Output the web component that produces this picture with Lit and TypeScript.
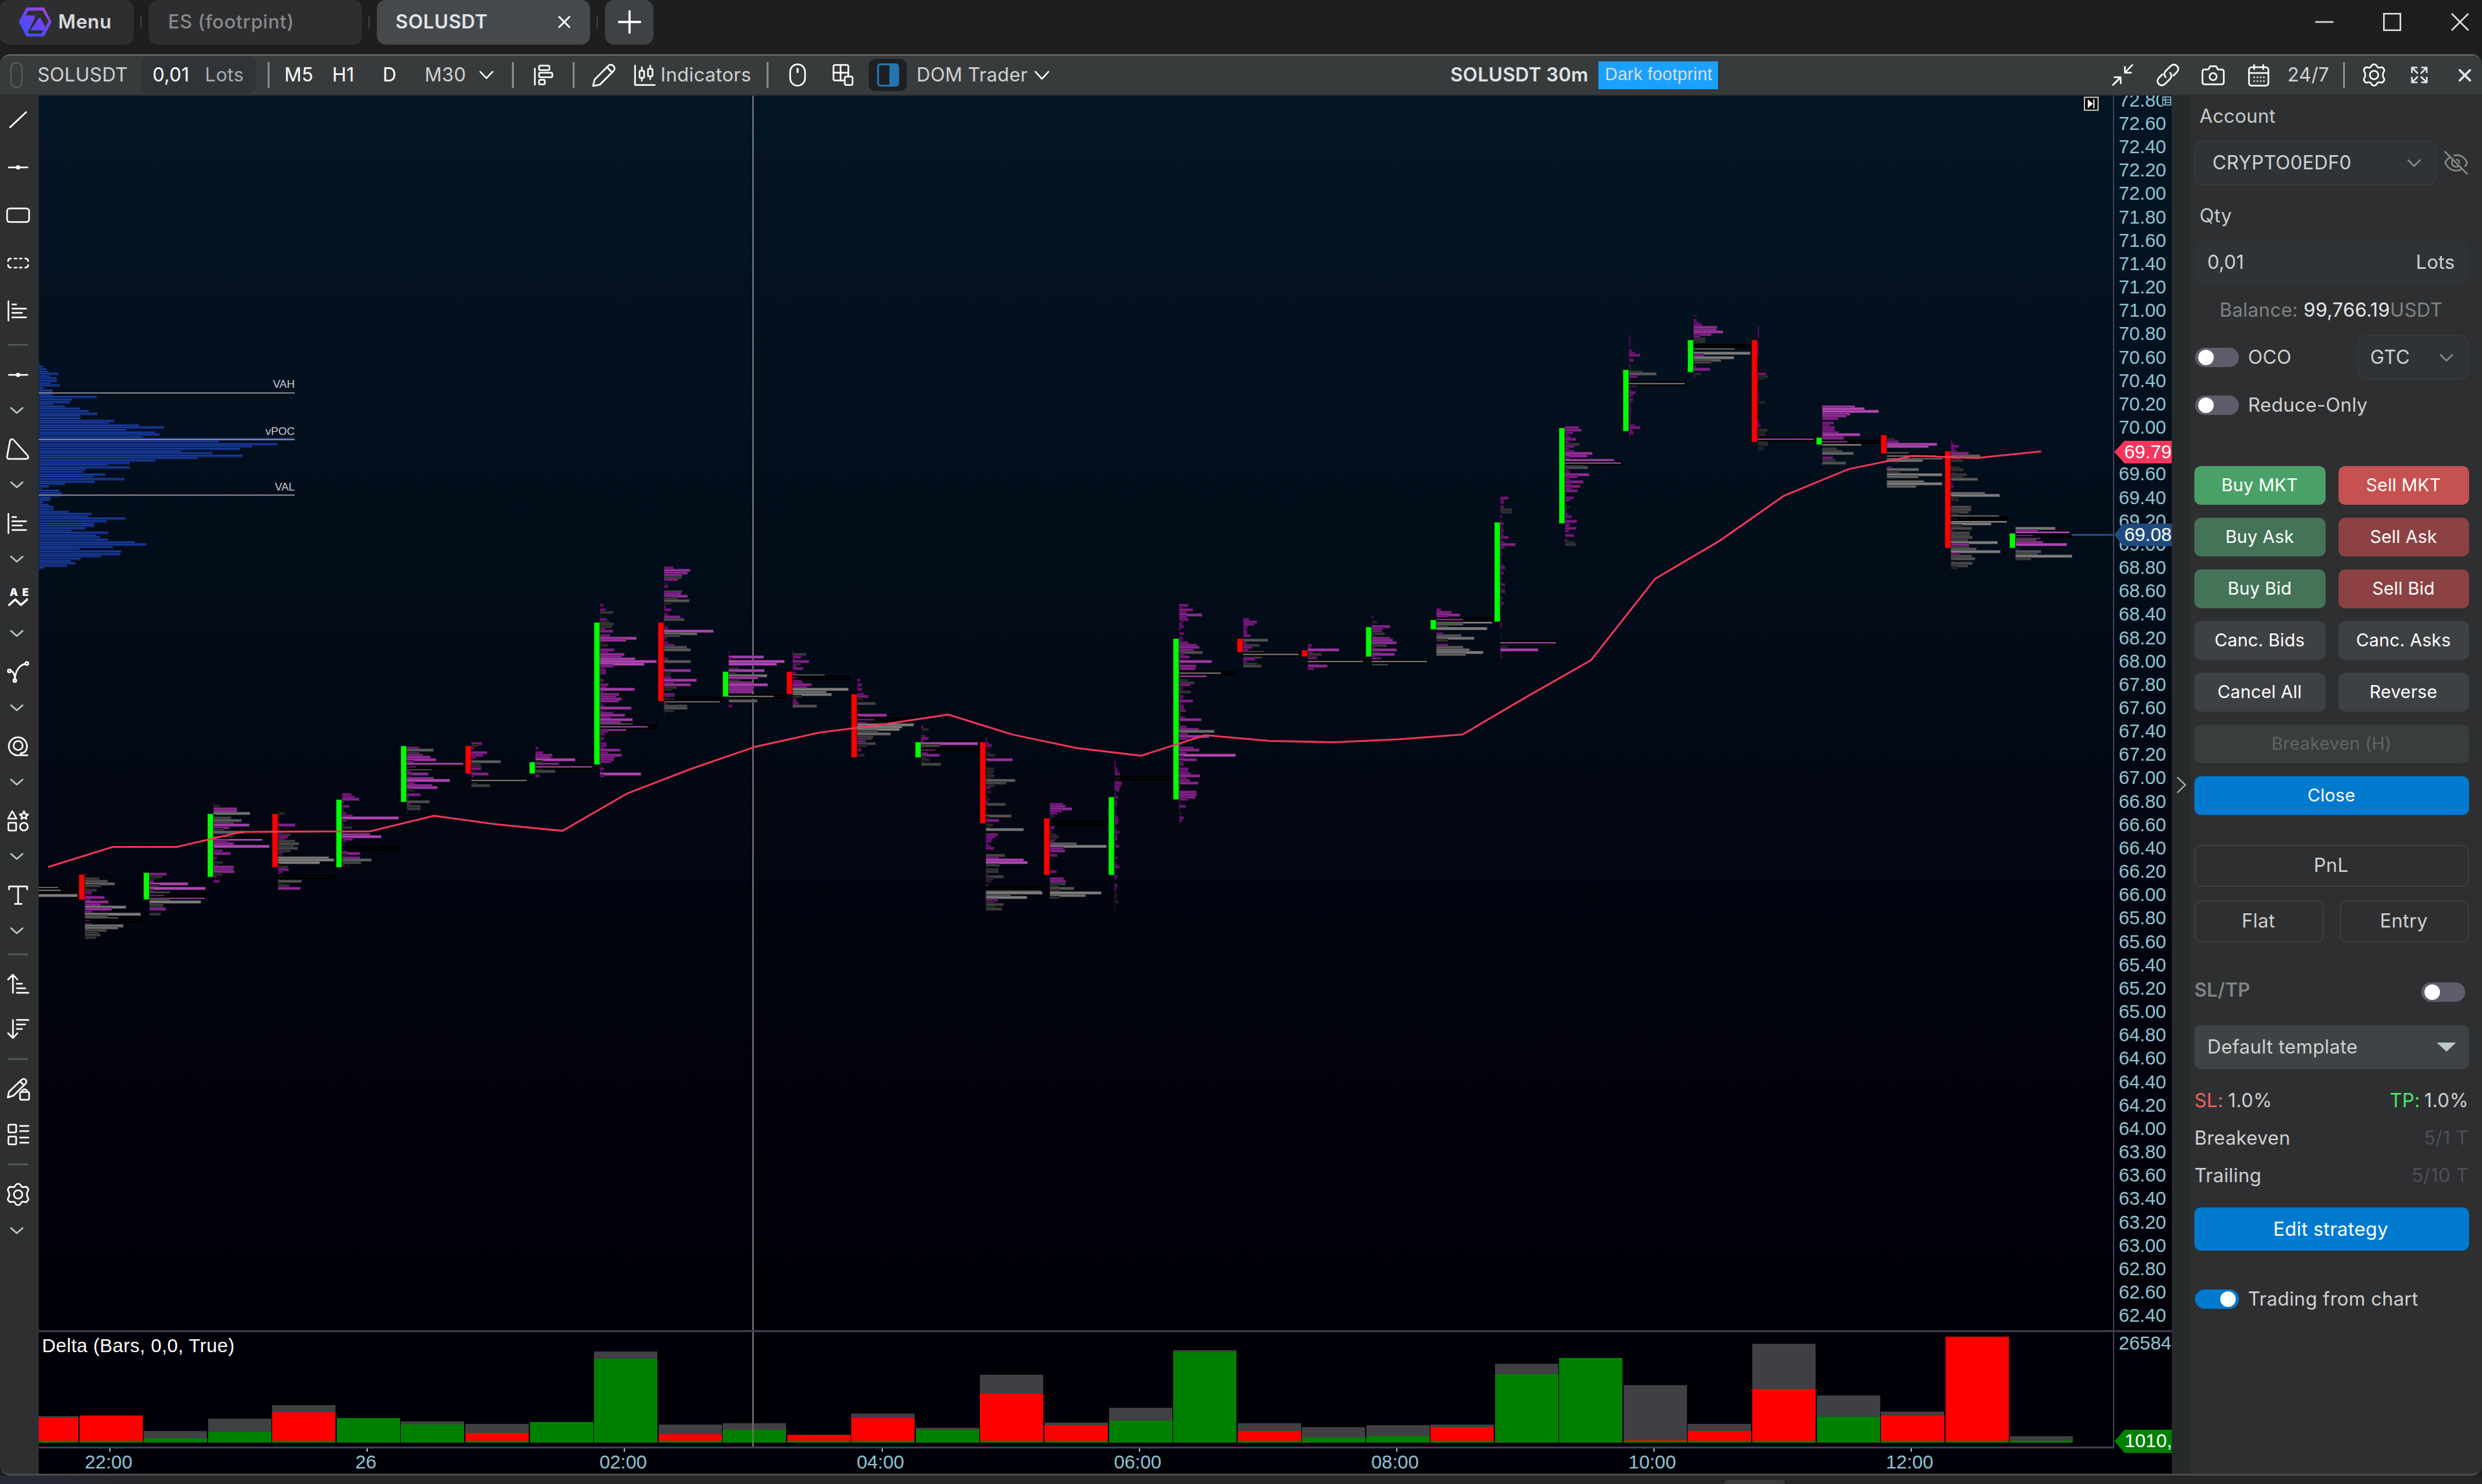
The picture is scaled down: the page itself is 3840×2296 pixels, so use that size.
import { LitElement, html, svg, css, SVGTemplateResult } from "lit";
import { customElement } from "lit/decorators.js";

/* ---------- chart geometry ---------- */
const SLOT = 99.55;
const BASE = 131.2;
const rowY = (r: number) => 481.1 + r * 3.616;

interface Candle {
  up: boolean;
  top: number;
  bottom: number;
  row: number;
  peak: number;
  rows: string;
}
const c = (up: boolean, top: number, bottom: number, row: number, peak: number, rows: string): Candle => ({ up, top, bottom, row, peak, rows });

const CANDLES: Candle[] = [
  c(false, 0, 0, 247, 106, "g70 kg75 g0 g106"),
  c(false, 1353, 1392, 241, 106, "p1 g0 g28 g43 g57 g31 g8 g23 p13 g5 p37 p12 p45 p30 g77 p51 p14 g105 g43 g63 kp8 g14 g72 g63 g41 g26 g30 g22"),
  c(true, 1350, 1392, 241, 106, "p32 g24 g12 p9 p72 g19 p105 p8 g38 kp28 p104 g39 g96 g27 g26 p31 g3 g22"),
  c(true, 1259, 1357, 211, 106, "p2 g13 p44 p45 g69 g5 g34 g53 g38 p68 p30 g19 g58 p21 kg36 p91 p28 p39 p105 p2 p18 p32 g3 p7 p2 g18 g10 p38 p37 p40 g18 p6 g3 p12"),
  c(false, 1259, 1342, 214, 106, "g2 g13 g5 g2 g1 p4 p32 g5 g4 g10 g24 p19 p14 g32 g40 g30 g37 g24 p10 g8 g95 g105 g78 g5 g19 p21 p10 p4 kg6 p2 g45 g10 g22 p42"),
  c(true, 1237, 1342, 207, 106, "p18 p24 p32 p5 g4 p15 p3 p5 p8 p20 p106 p8 p2 p5 g19 g3 g6 p53 p73 p20 p7 g5 p5 kp4 p10 p34 g10 p34 g55 g36 p5"),
  c(true, 1154, 1241, 187, 106, "p24 g51 g24 p30 p45 p56 p14 p106 kp18 g48 p8 p41 g10 p51 p81 p16 p48 p58 g14 g4 p26 p5 p3 g43 p8 g26 g27 g2 g1"),
  c(false, 1154, 1197, 185, 106, "p20 g14 p6 g3 p30 p23 p10 g5 g55 g18 g19 p19 g8 p32 p5 p4 kg103 g12 g35"),
  c(true, 1179, 1197, 187, 106, "p6 g1 p16 p33 p30 p75 g14 p44 kp106 g14 g37 g8 p9"),
  c(true, 963, 1183, 126, 106, "p7 g1 p12 g25 g4 g3 p13 g18 g27 g23 p11 p25 g3 p19 p69 p49 p5 g16 g4 p28 p16 p46 p41 p66 p106 p83 p27 p8 p12 p12 g2 g3 p7 g3 p17 p13 p65 p8 p36 p30 p41 p36 p5 p8 p59 p6 p25 p47 p20 p62 p40 g62 kp89 p49 p16 p10 p4 p8 p4 p13 p13 p8 p38 p16 p41 p28 p26 p22 p3 g1 p9 p3 p77 p8 g3 g2"),
  c(false, 963, 1085, 110, 106, "p18 p49 p44 p35 g34 p27 g6 g8 p8 g0 g35 p33 p45 g26 g48 g14 p3 p5 p14 g2 p9 p31 g39 p3 g4 g10 p9 p93 g63 g31 p6 g3 p9 p20 g43 g50 g0 g2 g3 p9 g50 g0 g3 p3 p51 g14 g12 p15 p61 p19 p51 g24 g16 g3 p20 p20 kg20 g105 p6 g43 g45 g19 g2 g1"),
  c(true, 1039, 1078, 146, 106, "p2 g0 p66 p6 p105 p90 g0 g19 p68 g16 g72 p56 g22 p45 p74 p48 p47 p44 g0 kg84 g16 g54 g2 p7"),
  c(false, 1039, 1074, 146, 106, "p3 g26 p17 p5 p31 g16 p8 p20 g3 p7 g60 kp10 p17 p20 p36 p28 g105 g64 g73 g17 g8 p9 p12 g46"),
  c(false, 1074, 1172, 158, 114, "p7 g1 p11 p4 p10 g2 p14 p23 g12 g4 g38 g2 g4 g7 g5 p60 g8 kp35 p20 g114 g91 g85 g43 g68 g34 g31 p18 g38 g20 g8 p9 g3 g15"),
  c(true, 1148, 1172, 178, 114, "p5 g16 g1 g2 p9 p16 p5 p114 g38 p8 kp28 p14 p38 g12 g17 g8 g40"),
  c(false, 1148, 1274, 183, 114, "p3 p2 p6 p13 g10 g5 g10 g19 g5 p54 g3 g0 g3 g17 g17 g14 g18 g13 g59 g41 g19 p10 g5 g12 g4 p3 g9 p5 g40 g3 p3 g3 g5 g52 g8 p27 g4 g15 g10 g77 g0 p24 p20 p14 p12 p5 p10 p17 g3 g0 g39 p27 p76 p84 g28 g0 g26 g26 p4 g36 g16 g12 g0 p7 kg0 g112 g114 g51 g83 p25 g18 g36 g20 g33 g2"),
  c(false, 1266, 1354, 211, 114, "p27 p32 p45 p25 p16 g10 g6 g4 kg0 g0 p10 g2 p4 g13 g19 g14 p10 g54 g114 p28 p31 g5 p15 g4 g0 g0 g5 g2 g2 p14 g0 g0 p29 p32 g32 g18 g49 g22 g103 g73 g19"),
  c(true, 1233, 1354, 193, 114, "p2 p2 p2 p6 p8 p12 g3 kg12 p10 p16 p14 p12 p10 g4 p3 p8 g3 p5 p7 p4 g2 p2 p3 p5 p8 p9 p8 p3 g2 p5 p10 p5 p6 p6 p2 p4 p10 g3 g2 g3 g2 p6 g2 p4 p7 p10 g4 p2 p2 p6 p2 g0 p3 p7 p4 p2 g5 g6 p2 g4 g9 g1 g1 g1"),
  c(true, 988, 1237, 126, 114, "p19 p8 p29 p16 p46 p17 p19 g10 p7 p10 p5 g4 p10 g3 p8 p7 p20 p36 p41 p30 g48 p12 p22 p3 p66 p5 p35 p34 p4 kg84 p56 g0 g18 g31 p23 g10 p6 g25 g3 p9 p7 p28 p5 p11 p10 p14 g5 g6 p13 p45 g3 g3 p16 p40 g71 p18 p61 p20 g0 g10 p5 p30 p41 p16 p114 p10 p36 p8 p10 g2 p19 p18 p25 p43 p16 p22 p39 g5 p3 p1 p35 p36 p34 p18 p3 p3 p14 p3 g3 g6 g5 p11 p7 p2 g1"),
  c(false, 988, 1009, 132, 114, "p13 p29 p23 p10 p8 p9 p9 p15 g3 g51 p8 g34 p20 p12 g43 kg111 g37 p25 p9 g28 g38"),
  c(false, 1006, 1016, 143, 114, "p9 p7 p63 p12 g29 g19 p20 kg112 g22 p40 p13"),
  c(true, 970, 1016, 131, 114, "p4 g0 g12 g1 p38 p23 p21 g27 g10 p37 p43 p50 g31 p7 p50 g20 p46 p8 p20 kg112 g34 g3"),
  c(true, 959, 974, 128, 114, "p11 p31 p48 p26 kp55 g113 g54 g26 g102 g0 p14 g51 g76 g23 g0 p24 g54 g68 g95 g60"),
  c(true, 808, 962, 80, 125, "p19 p9 p8 g1 p9 g27 g25 g1 p4 g0 p2 p9 p4 p6 p9 p6 p8 p19 p4 p10 p34 p10 p2 p3 p5 p2 p3 p2 p3 p8 p11 p4 p9 g0 p2 p3 p2 p11 g2 g12 p11 g1 g1 p5 p3 p9 p4 g0 g2 g1 g0 g0 g0 g1 p4 p3 g0 g0 p2 g2 g4 g3 kp124 g12 g17 p84 p3 p3 p4 g1 g1 g1"),
  c(true, 662, 810, 50, 125, "p31 p37 p19 p8 p13 p26 p10 g32 p22 p10 p21 p61 p50 p11 p108 kp124 g44 g51 p8 p12 p54 p29 p12 p41 p15 p34 p16 p29 g1 g1 p20 p11 g0 g2 g12 p4 p3 p8 p16 p4 p27 p11 p11 p25 p10 g0 p21 g1 p6 g22 g26"),
  c(true, 572, 667, 11, 125, "p2 p2 p4 p4 p2 g1 p7 p14 p25 p2 p12 g2 p2 p4 g8 g31 g61 p19 p4 p3 kg123 p18 p2 p6 p16 p10 p3 p10 p6 p1 p6 p6 p5 p3 p5 p4 p4 p4 p14 p26 p8 p11 p5 g5 g4"),
  c(true, 526, 576, 2, 125, "g8 g3 p7 p11 p19 p53 p51 p65 p40 p16 g27 g27 g14 kg0 g91 g3 g125 p24 g90 g61 g40 g0 p7 p37 g0 g17 p3"),
  c(false, 526, 684, 7, 125, "p2 p4 p4 p3 p2 g2 g2 p3 p3 p3 p3 p2 p3 g2 g0 g0 g0 g0 g0 g3 p20 g24 g17 p3 g4 g2 g3 g2 p2 p4 p3 g5 g17 g4 g3 g6 g3 g4 g4 g3 p2 p4 p7 g0 g23 g17 g18 p4 kp124 g24 g24 g14 g14 g4"),
  c(true, 677, 688, 41, 125, "p72 p94 p125 p63 p54 p36 g0 p25 p18 p29 p29 p37 p84 p49 p48 kp56 g87 g0 g33 g45 g70 g0 p24 g30 g53"),
  c(false, 673, 702, 55, 125, "g18 p27 p111 p92 g0 g3 g48 kg110 g124 g80 g0 g0 p11 g71 g31 g122 g69 g0 g82 g122 g66"),
  c(false, 698, 848, 56, 125, "p2 p7 p18 p9 p14 p40 g66 p21 g27 g2 g3 g20 g29 g10 g35 g27 g60 g2 p4 p7 g0 g0 g75 g108 g19 g18 g2 g4 g45 g45 g40 g18 g107 kg14 g124 g90 g25 g47 p5 g43 g43 g49 g38 g103 p41 g41 g57 g110 p21 g47 g54 g11 g48 g39 g15"),
  c(true, 825, 848, 93, 125, "g88 p50 p119 kp38 p55 g47 p61 p113 g2 g8 g57 g50 g125 g35"),
];

const AVERAGE = [
  1341.4, 1310.4, 1310.4, 1287.1, 1286.5, 1286.3, 1262.2, 1275.7, 1285.5, 1228, 1189.6, 1155.3, 1133.3, 1120.6, 1105.5, 1136.5,
  1157.3, 1169.2, 1137.3, 1146.3, 1148.4, 1143.9, 1136.5, 1078, 1021.4, 895.2, 836.7, 767.1, 726, 705.4, 708.6, 698.3,
];

const VOLUME = [
  2, 7, 12, 15, 31, 18, 28, 29, 19, 33, 8, 22, 22, 22, 90, 52, 48, 23, 41, 64, 78, 91, 65, 65, 117, 109, 156, 194, 136, 180, 187, 162,
  396, 279, 370, 330, 312, 221, 269, 316, 246, 181, 141, 107, 141, 72, 69, 103, 85, 133, 87, 41, 16, 5, 32, 36, 36, 19, 18, 7, 16, 23,
  23, 47, 82, 76, 134, 105, 86, 86, 73, 51, 108, 89, 95, 108, 149, 167, 115, 64, 128, 126, 97, 65, 50, 57, 44, 8,
];

/* [gray top, delta top, positive], distances in thirds of a pixel below y = 2000 */
const DELTA: [number, number, boolean][] = [
  [574, 579, false], [570, 570, false], [643, 675, true], [586, 646, true], [522, 556, false], [582, 582, true], [598, 611, true],
  [610, 652, false], [600, 600, true], [273, 306, true], [613, 657, false], [607, 636, true], [660, 660, false], [561, 582, false],
  [628, 636, true], [381, 468, false], [604, 615, false], [535, 594, true], [268, 275, true], [607, 642, false], [625, 672, true],
  [616, 666, true], [613, 624, false], [331, 379, true], [303, 303, true], [430, 684, false], [610, 642, false], [237, 447, false],
  [478, 576, true], [553, 570, false], [204, 204, false], [667, 687, true],
];

const TIMES = ["22:00", "26", "02:00", "04:00", "06:00", "08:00", "10:00", "12:00"];

const shade = (kind: string, v: number, peak: number, k = 1) => {
  const t = Math.min(1, (v / peak) * 1.35);
  const rgb = kind === "p" ? [100 + 76 * t, 8 + 62 * t, 110 + 70 * t] : [20 + 106 * t, 20 + 106 * t, 24 + 103 * t];
  return `rgb(${rgb.map((n) => Math.round(n * k)).join(",")})`;
};

const footprint = (d: Candle, i: number): SVGTemplateResult => {
  const x = Math.round(BASE + SLOT * (i - 1));
  const bars: SVGTemplateResult[] = [];
  const tops: SVGTemplateResult[] = [];
  d.rows.split(" ").forEach((cell, n) => {
    const poc = cell[0] === "k";
    const body = poc ? cell.slice(1) : cell;
    const kind = body[0];
    const v = Number(body.slice(1));
    const w = Math.round((v / d.peak) * 88);
    const y = Math.round(rowY(d.row + n) - 2.5);
    if (poc) {
      tops.push(svg`<rect x=${x - 1} y=${y - 1} width="90" height="7" fill="#000"></rect>
        <rect x=${x} y=${y + 2} width="87" height="1" fill="#090a10"></rect>
        ${v ? svg`<rect x=${x} y=${y + 1} width=${w} height="3" fill=${shade(kind, v, d.peak, 0.5)}></rect>
        <rect x=${x} y=${y + 2} width=${w} height="1" fill=${shade(kind, v, d.peak)}></rect>` : null}`);
    } else if (v > 0) {
      bars.push(svg`<rect x=${x} y=${y} width=${Math.max(2, w)} height="5" fill=${shade(kind, v, d.peak, 0.62)}></rect>
        <rect x=${x + 1} y=${y + 1} width=${Math.max(1, w - 2)} height="3" fill=${shade(kind, v, d.peak)}></rect>`);
    }
  });
  return svg`${bars}${tops}${d.bottom > d.top
    ? svg`<rect x=${x - 8.5} y=${d.top + 0.5} width="8" height=${d.bottom - d.top - 1} fill=${d.up ? "#00ff00" : "#ff0000"} stroke=${d.up ? "#04b30c" : "#b80408"}></rect>`
    : null}`;
};

/* ---------- icons ---------- */
const icon = (w: number, h: number, body: SVGTemplateResult) =>
  html`<svg class="ic" width=${w} height=${h} viewBox="0 0 ${w} ${h}">${body}</svg>`;

const chevron = (w = 20, h = 10) => icon(w, h, svg`<path d="M1 1 L${w / 2} ${h - 1} L${w - 1} 1"/>`);

const gear = svg`<path d="M15 2.500 Q18 0.500 21 2.500 L23.500 6 Q24.500 7 26 6.700 L30 6 Q33 7 34 11 L32 15 Q31.300 18 32 21 L34 25 Q33 29 30 30 L26 29.300 Q24.500 29 23.500 30 L21 33.500 Q18 35.500 15 33.500 L12.500 30 Q11.500 29 10 29.300 L6 30 Q3 29 2 25 L4 21 Q4.700 18 4 15 L2 11 Q3 7 6 6 L10 6.700 Q11.500 7 12.500 6 Z"/><circle cx="18" cy="18" r="6.500"/>`;

const TOOL = {
  line: icon(40, 40, svg`<path d="M7.500 32 L32.500 8.500"/>`),
  hline: icon(40, 40, svg`<path d="M5.500 20 H34.500"/><circle cx="20" cy="20" r="2" class="solid"/>`),
  rect: icon(40, 40, svg`<rect x="3" y="9.500" width="34" height="21" rx="4"/>`),
  dashed: icon(40, 40, svg`<path d="M4.500 17 Q4.500 13 9 13 M14.500 13 h3 M22.500 13 h3 M31 13 Q35.500 13 35.500 17 M35.500 23 Q35.500 27 31 27 M25.500 27 h-3 M17.500 27 h-3 M9 27 Q4.500 27 4.500 23"/>`),
  profile: icon(40, 40, svg`<path d="M5 5 V35 M11 10 H17 M11 16.500 H32.500 M11 23 H26 M11 30 H32.500"/>`),
  triangle: icon(40, 40, svg`<path d="M7.500 7 Q9 3.500 12.500 5 L35 30 Q37 34.500 33 35 H6 Q2.500 35 3 31 Z"/>`),
  waves: icon(40, 40, svg`<text class="wave" x="7" y="17">A</text><text class="wave" x="26.500" y="17">E</text><path d="M6 31 L15.500 22.500 L24.500 31 L34 22.500" stroke-width="3.200"/>`),
  curve: icon(40, 40, svg`<path d="M9 18 Q15 20 15 32 Q16 11 31 7"/><circle cx="6.500" cy="18" r="2.300"/><circle cx="33.500" cy="6.500" r="2.300"/><circle cx="15" cy="33" r="2.300"/>`),
  target: icon(40, 40, svg`<path d="M24 33 A14 14 0 1 1 33 24 Q31 30 24 30.500 L25 33.500 H34.500"/><circle cx="20" cy="18.500" r="7"/>`),
  shapes: icon(40, 40, svg`<path d="M11 5 L17.500 16.500 H4.500 Z M29 5 L31 9.500 L35.500 10 L32 13 L33 17 L29 15 L25 17 L26 13 L22.500 10 L27 9.500 Z"/><rect x="5" y="23" width="12" height="12" rx="1"/><circle cx="29" cy="29" r="6"/>`),
  text: icon(40, 40, svg`<path d="M6 11 V6.500 H34 V11 M20 6.500 V33.500 M15 33.500 H25.500"/>`),
  asc: icon(40, 40, svg`<path d="M12 34 V6 M4.500 13.500 L12 6 L19 13.500 M18 20 H26 M18 27 H31 M18 34 H36"/>`),
  desc: icon(40, 40, svg`<path d="M12 6 V34 M4.500 26.500 L12 34 L19 26.500 M18 6 H36 M18 13 H31 M18 20 H26"/>`),
  penlock: icon(40, 40, svg`<path d="M4 33 L6 24 L25 6 Q29 2.500 32 6 Q34 9 31 12 L13 30 Z M23 8 L29 14"/><rect x="23" y="24.500" width="14" height="12" rx="2" fill="#2e2f31"/><path d="M26 24 V22.500 Q30 18 34 22.500 V24"/>`),
  list: icon(40, 40, svg`<rect x="5" y="5" width="12" height="12" rx="1.500"/><rect x="5" y="23.500" width="12" height="12" rx="1.500"/><path d="M23 7 H36 M23 15 H36 M23 25 H36 M23 33 H36"/>`),
  gear: icon(36, 36, gear),
};

@customElement("side-tools")
export class SideTools extends LitElement {
  static styles = css`
    :host { display: flex; flex-direction: column; align-items: center; width: 56px; padding-right: 4px; background: #2e2f31; }
    .ic { fill: none; stroke: #fff; stroke-width: 2.5; stroke-linecap: round; stroke-linejoin: round; overflow: visible; }
    .solid { fill: #fff; }
    .wave { font: 900 16px Inter, sans-serif; fill: #fff; stroke: none; }
    .tool { display: flex; align-items: center; justify-content: center; height: 74px; flex: none; }
    .group { display: flex; flex-direction: column; align-items: center; height: 115px; flex: none; }
    .group .tool { height: 62px; }
    .more { display: flex; align-items: center; height: 47px; padding-right: 4px; }
    .more .ic { stroke: #b4c4c2; }
    .short { height: 70px; }
    .sep { flex: none; width: 32px; height: 3px; background: #4a5654; margin: 14px 0; }
    .s2 { margin: 6px 0 9px; }
    .s3 { margin: 10px 0; }
    .last { height: 42px; }
  `;
  render() {
    const t = (i: unknown, k = "") => html`<div class="tool ${k}">${i}</div>`;
    const g = (i: unknown) => html`<div class="group">${t(i)}<div class="more">${chevron()}</div></div>`;
    return html`
      ${[TOOL.line, TOOL.hline, TOOL.rect, TOOL.dashed, TOOL.profile].map((i) => t(i))}
      <div class="sep"></div>
      ${[TOOL.hline, TOOL.triangle, TOOL.profile, TOOL.waves, TOOL.curve, TOOL.target, TOOL.shapes, TOOL.text].map(g)}
      <div class="sep s2"></div>
      ${t(TOOL.asc, "short")}${t(TOOL.desc, "short")}
      <div class="sep s3"></div>
      ${t(TOOL.penlock, "short")}${t(TOOL.list, "short")}
      <div class="sep s3"></div>
      ${t(TOOL.gear, "short")}
      <div class="more last">${chevron()}</div>
    `;
  }
}

@customElement("price-chart")
export class PriceChart extends LitElement {
  static styles = css`
    :host { display: block; width: 3300px; height: 2132px; }
    svg { display: block; }
    text { font-family: "Liberation Sans", Arial, sans-serif; font-size: 29.33px; }
    .axis { fill: #8fc5d3; }
    .study { fill: #fff; letter-spacing: 0.42px; }
    .crisp { shape-rendering: crispEdges; }
    .level { font-size: 17px; fill: #c9cbd0; }
  `;
  render() {
    /* the 69.80 step lies under the average's price tag */
    const prices = Array.from({ length: 53 }, (_, i) => i).filter((i) => i !== 15);
    return html`<svg width="3300" height="2132" viewBox="60 148 3300 2132">
      <defs>
        <linearGradient id="bg" x1="0" y1="148" x2="0" y2="2280" gradientUnits="userSpaceOnUse">
          <stop offset="0" stop-color="#041524" />
          <stop offset="0.33" stop-color="#030d1a" />
          <stop offset="0.62" stop-color="#02040e" />
          <stop offset="0.85" stop-color="#010009" />
          <stop offset="1" stop-color="#010009" />
        </linearGradient>
      </defs>
      <rect x="60" y="148" width="3300" height="2132" fill="url(#bg)" />
      <g class="crisp">
        <rect x="60" y="2060" width="3300" height="220" fill="#010008" />
        ${VOLUME.map((w, i) => {
          const y = Math.round(rowY(23 + i) - 2.5);
          return svg`<rect x="60" y=${y} width=${w} height="5" fill="#0e2158"></rect><rect x="61" y=${y + 1} width=${Math.max(1, w - 2)} height="2" fill="#163b9b"></rect>`;
        })}
        ${[607, 679, 765].map((y) => svg`<rect x="60" y=${y} width="396" height="2" fill="#81838c"></rect>`)}
        <rect x="1164" y="148" width="2" height="2091" fill="#7e7e7e" />
        ${CANDLES.map(footprint)}
        ${DELTA.map(([gray, top, pos], i) => {
          const x = Math.round(BASE + SLOT * (i - 1) - 8.5);
          const y = 2000 + gray / 3;
          const yd = 2000 + top / 3;
          return svg`<rect x=${x} y=${y} width="98" height=${2231.7 - y} fill="#403f43"></rect>
            <rect x=${x} y=${yd} width="98" height=${2231.7 - yd} fill=${pos ? "#008000" : "#ff0000"}></rect>
            <rect x=${x} y="2229" width="98" height="3" fill="#008000"></rect>`;
        })}
        <rect x="1164" y="2060" width="2" height="179" fill="#808080" opacity="0.75" />
        <rect x="60" y="2058" width="3300" height="3" fill="#3d3e4d" />
        <rect x="60" y="2238" width="3211" height="3" fill="#3d3e4d" />
        <rect x="3269" y="148" width="2" height="2091" fill="#3f4250" />
        ${TIMES.map((_, i) => svg`<rect x=${Math.round(169 + 398.2 * i)} y="2241" width="2" height="5" fill="#8fc5d3"></rect>`)}
        <rect x="3205" y="826" width="66" height="3" fill="#1f4a80" />
      </g>
      <polyline fill="none" stroke="#f5365c" stroke-width="2.800" points=${AVERAGE.map((y, i) => `${(74.5 + 99.46 * i).toFixed(1)},${y}`).join(" ")} />
      <text class="level" x="456" y="600" text-anchor="end">VAH</text>
      <text class="level" x="456" y="673" text-anchor="end">vPOC</text>
      <text class="level" x="456" y="759" text-anchor="end">VAL</text>
      ${prices.map((i) => svg`<text class="axis" x="3278" y=${(164.8 + 36.16 * i).toFixed(1)}>${(72.8 - i * 0.2).toFixed(2)}</text>`)}
      ${TIMES.map((t, i) => svg`<text class="axis" x=${168 + 398.05 * i} y="2272" text-anchor="middle">${t}</text>`)}
      <text class="axis" x="3278" y="2087.500">26584</text>
      <text class="study" x="65" y="2092">Delta (Bars, 0,0, True)</text>
      <path d="M3271 699 L3287 682 H3360 V717 H3287 Z" fill="#f5365c" />
      <text x="3286.500" y="708.500" fill="#fff">69.79</text>
      <path d="M3271 827.500 L3283 812 Q3285 810 3288 810 H3360 V845 H3288 Q3285 845 3283 843 Z" fill="#1f4a80" />
      <text x="3286.500" y="837" fill="#fdfbe6">69.08</text>
      <path d="M3271 2230 L3287 2212 H3360 V2248 H3287 Z" fill="#008000" />
      <text x="3287" y="2239" fill="#fff">1010,</text>
      <rect x="3225" y="150.500" width="21" height="20" fill="#000" stroke="#f0f0e0" stroke-width="1.600" />
      <path d="M3230 153.500 L3238 160.500 L3230 167.500 Z M3238.500 153.500 h2 v14 h-2 Z" fill="#fff" />
      <rect x="3344" y="148" width="16" height="16" fill="#04141f" />
      <path d="M3346 150 H3358.500 V162.500 H3346 Z M3346 154.500 H3358.500 M3350 150 V162.500 M3350 158.500 H3358.500" fill="none" stroke="#8fc5d3" stroke-width="1.500" />
    </svg>`;
  }
}

@customElement("order-panel")
export class OrderPanel extends LitElement {
  static styles = css`
    :host { display: block; width: 425px; height: 2132px; padding: 0 20px 0 5px; background: #2e2f31; font: 29.33px/40px Inter, sans-serif; color: #d0d1d1; letter-spacing: 0.3px; }
    .ic { fill: none; stroke: #868a8b; stroke-width: 2.5; stroke-linecap: round; stroke-linejoin: round; overflow: visible; flex: none; }
    .row { display: flex; align-items: center; }
    .grow { flex: 1; }
    .label { height: 65px; line-height: 64px; padding: 0 0 4px 8px; color: #c6cdcd; }
    .qty { height: 75px; line-height: 75px; padding: 9px 0 0 8px; }
    .box { box-sizing: border-box; display: flex; align-items: center; justify-content: space-between; height: 70px; border: 2px solid #36383a; border-radius: 14px; background: #2f3336; padding: 0 23px 0 26px; }
    .acct { width: 375px; margin-right: 12px; }
    .input { border-color: #2f3336; padding: 0 20px 0 18px; }
    .gtc { width: 173px; padding: 0 23px 0 18px; }
    .balance { justify-content: center; height: 77px; color: #7f8485; white-space: pre; padding-right: 2px; }
    .balance b { font-weight: 400; color: #e4e8e8; }
    .sw { display: flex; align-items: center; justify-content: flex-start; box-sizing: border-box; width: 68px; height: 30px; padding: 0 5px; border-radius: 15px; background: #5d5d6b; margin: 0 14px 0 1px; }
    .sw::before { content: ""; width: 24px; height: 24px; border-radius: 50%; background: #fff; }
    .on { background: #007acf; justify-content: flex-end; }
    .ro { height: 77px; margin-bottom: 56px; }
    .grid { display: grid; grid-template-columns: 203px 202px; gap: 20px; font-size: 27.2px; letter-spacing: 0.2px; }
    .btn { box-sizing: border-box; display: flex; align-items: center; justify-content: center; height: 60px; border-radius: 10px; color: #fff; background: #3e4144; padding-right: 1px; }
    .wide { grid-column: span 2; }
    .g1 { background: #4aa168; }
    .g2 { background: #447357; }
    .r1 { background: #c55150; }
    .r2 { background: #8c4143; }
    .off { background: #3a3d3d; color: #626565; }
    .blue { background: #007acf; }
    .outs { display: grid; grid-template-columns: 200px 200px; gap: 21px 25px; margin-top: 46px; }
    .out { height: 65px; border: 2px solid #3c3e40; background: none; color: #d0d1d1; padding: 0 2px 1px 0; }
    .sltp { height: 103px; padding-top: 25px; justify-content: space-between; font-weight: 600; color: #7f8485; }
    .sltp .sw { margin-right: 6px; }
    .sltp .t { padding-bottom: 6px; }
    .tpl { box-sizing: border-box; display: flex; align-items: center; justify-content: space-between; height: 68px; margin-bottom: 20px; padding: 0 20px 1px 20px; border-radius: 10px; background: #3f4345; }
    .tri { fill: #bcc9c9; }
    .kv { display: flex; justify-content: space-between; height: 58px; line-height: 58px; padding-right: 1px; }
    .sl, .tp { margin-right: -1px; }
    .sl { color: #f4605f; }
    .tp { color: #4fe36d; margin-right: -2px; }
    .dim { color: #4d4e5a; }
    .edit { height: 67px; margin-top: 20px; padding-right: 3px; }
    .tfc { margin-top: 55px; }
  `;
  render() {
    const btn = (t: string, k = "") => html`<div class="btn ${k}">${t}</div>`;
    return html`
      <div class="label">Account</div>
      <div class="row">
        <div class="box acct"><span>CRYPTO0EDF0</span>${chevron(20, 11)}</div>
        ${icon(36, 36, svg`<path d="M1 1 L35 35 M9 9 Q3 13 1 18 Q7 30 18 30 Q23 30 27 27.500 M15 6.500 Q29 4 35 18 Q34 20.500 32 23 M12.500 13 Q10 18 13 22 Q16 25 21 23.500 M19 13 Q23 14 23 18"/>`)}
      </div>
      <div class="label qty">Qty</div>
      <div class="box input"><span>0,01</span><span>Lots</span></div>
      <div class="row balance">Balance: <b>99,766.19</b>USDT</div>
      <div class="row"><div class="sw"></div>OCO<div class="grow"></div><div class="box gtc"><span>GTC</span>${chevron(20, 11)}</div></div>
      <div class="row ro"><div class="sw"></div>Reduce-Only</div>
      <div class="grid">
        ${btn("Buy MKT", "g1")}${btn("Sell MKT", "r1")}${btn("Buy Ask", "g2")}${btn("Sell Ask", "r2")}
        ${btn("Buy Bid", "g2")}${btn("Sell Bid", "r2")}${btn("Canc. Bids")}${btn("Canc. Asks")}
        ${btn("Cancel All")}${btn("Reverse")}${btn("Breakeven (H)", "wide off")}${btn("Close", "wide blue")}
      </div>
      <div class="outs">${btn("PnL", "out wide")}${btn("Flat", "out")}${btn("Entry", "out")}</div>
      <div class="row sltp"><span class="t">SL/TP</span><div class="sw"></div></div>
      <div class="tpl"><span>Default template</span><svg class="tri" width="30" height="14"><path d="M0 0 H30 L15 14 Z" /></svg></div>
      <div class="kv"><span><span class="sl">SL:</span> 1.0%</span><span><span class="tp">TP:</span> 1.0%</span></div>
      <div class="kv"><span>Breakeven</span><span class="dim">5/1 T</span></div>
      <div class="kv"><span>Trailing</span><span class="dim">5/10 T</span></div>
      ${btn("Edit strategy", "edit blue")}
      <div class="row tfc"><div class="sw on"></div>Trading from chart</div>
    `;
  }
}

@customElement("app-root")
export class AppRoot extends LitElement {
  static styles = css`
    :host { display: block; width: 3840px; height: 2296px; overflow: hidden; background: #1e1e1e; font: 29.33px/40px Inter, sans-serif; color: #d0d2d4; }
    .ic { display: block; fill: none; stroke: #fff; stroke-width: 2.5; stroke-linecap: round; stroke-linejoin: round; overflow: visible; flex: none; }
    .title { display: flex; height: 84px; align-items: flex-start; }
    .tab { box-sizing: border-box; display: flex; align-items: center; height: 69px; padding-bottom: 2px; border-radius: 14px; background: #2d2e30; font-weight: 500; white-space: nowrap; letter-spacing: 0.6px; }
    .menu { width: 207px; padding-left: 29px; gap: 10px; font-weight: 600; color: #d9dbdd; }
    .idle { width: 330px; padding-left: 30px; color: #87898b; }
    .active { width: 330px; padding: 0 31px 2px 29px; justify-content: space-between; background: #46494c; font-weight: 600; color: #dfe4e8; }
    .plus { width: 75px; justify-content: center; background: #3f4245; }
    .tick { flex: none; width: 2px; height: 20px; margin: 24px 11px 0 10px; background: #3c3e40; }
    .wins { display: flex; align-items: center; margin-left: auto; height: 68px; gap: 77px; padding-right: 20px; }
    .wins .ic { stroke: #dedede; stroke-linecap: butt; stroke-linejoin: miter; }
    .frame { box-sizing: border-box; height: 2199px; border-top: 2px solid #6a6d70; border-bottom: 3px solid #4a4a4a; border-radius: 16px; overflow: hidden; background: #2e2f31; }
    .bar { display: flex; align-items: center; height: 60px; margin-bottom: 2px; background: #383b3c; white-space: nowrap; letter-spacing: 0.3px; }
    .bar > * { flex: none; }
    .handle { box-sizing: border-box; width: 19px; height: 40px; margin: 0 23px 0 16px; border: 2px solid #5b5f61; border-radius: 9px; }
    .sym { width: 160px; }
    .lots { box-sizing: border-box; display: flex; gap: 24px; align-items: center; width: 179px; height: 58px; padding-left: 18px; border-radius: 12px; background: #303437; color: #fff; }
    .lots i { font-style: normal; color: #a7aeb0; }
    .sep { width: 3px; height: 40px; background: #878b8d; }
    .s1 { margin: 0 23px 0 17px; }
    .tf { color: #fff; }
    .m5 { width: 74px; }
    .h1 { width: 78px; }
    .d1 { width: 65px; }
    .m30 { width: 85px; }
    .s2 { margin: 0 31px 0 29px; }
    .s3 { margin: 0 27px 0 30px; }
    .candles { margin-left: 28px; }
    .ind { width: 164px; margin-left: 8px; }
    .s4 { margin-right: 32px; }
    .layout { margin-left: 41px; }
    .dom { display: flex; align-items: center; justify-content: center; width: 59px; height: 50px; margin: 0 15px 0 24px; border-radius: 10px; background: #1f2021; }
    .trader { width: 183px; }
    .name { width: 229px; margin-left: 621px; font-weight: 600; color: #dfe4e8; }
    .badge { box-sizing: border-box; width: 185px; height: 43px; padding-left: 10px; background: #1aa1ff; color: #dcdcd6; font: 27px/41px "Liberation Sans", Arial, sans-serif; }
    .right { display: flex; align-items: center; margin-left: auto; padding-right: 17px; }
    .link { margin: 0 34px 0 36px; }
    .cal { margin: 0 28px 0 36px; }
    .w247 { width: 86px; }
    .s5 { margin-right: 27px; }
    .expand { margin: 0 48px 0 39px; }
    .soft .ic { stroke: #dde4ea; }
    .body { display: flex; }
    .fold { display: flex; align-items: center; justify-content: center; width: 30px; height: 2132px; background: #272a2b; }
    .fold .ic { stroke: #b0b5b5; stroke-width: 2; margin-top: 1px; }
    .under { height: 13px; background: linear-gradient(90deg, #262a3a, #262626 260px); display: flex; align-items: flex-end; }
    .grip { width: 95px; height: 6px; margin-left: 2667px; border-radius: 10px 10px 0 0; background: #3c3c3c; }
  `;
  render() {
    const sep = (k: string) => html`<div class="sep ${k}"></div>`;
    return html`
      <div class="title">
        <div class="tab menu">
          <svg width="51" height="46" viewBox="0 0 51 46">
            <defs>
              <linearGradient id="lg" x1="0.9" y1="0" x2="0.3" y2="0.8"><stop offset="0" stop-color="#a64bd8" /><stop offset="0.6" stop-color="#6a45f2" /><stop offset="1" stop-color="#4b4cf8" /></linearGradient>
            </defs>
            <path fill="url(#lg)" d="M12 0.500 H39 L51 23 L39 45.500 H12 L0 23 Z" />
            <path fill="#2d2e30" d="M15 5.500 H37 L46 22 L41 31 L34 17 H31 L15 40 L14 39 L24 19 L25 13 H11 Z M22 36 L31 36 H38 L35 41 H15 L17 36 Z" />
          </svg>
          <span>Menu</span>
        </div>
        <div class="tick"></div>
        <div class="tab idle">ES (footrpint)</div>
        <div class="tick"></div>
        <div class="tab active"><span>SOLUSDT</span>${icon(18, 18, svg`<path d="M1 1 L17 17 M17 1 L1 17"/>`)}</div>
        <div class="tick"></div>
        <div class="tab plus">${icon(36, 36, svg`<path stroke-width="3.400" d="M18 1.500 V34.500 M1.500 18 H34.500"/>`)}</div>
        <div class="wins">
          ${icon(28, 28, svg`<path d="M0 14 H28"/>`)} ${icon(28, 28, svg`<rect x="1.250" y="1.250" width="25.500" height="25.500"/>`)}
          ${icon(28, 28, svg`<path d="M1 1 L27 27 M27 1 L1 27"/>`)}
        </div>
      </div>
      <div class="frame">
        <div class="bar">
          <div class="handle"></div>
          <div class="sym">SOLUSDT</div>
          <div class="lots"><span>0,01</span><i>Lots</i></div>
          ${sep("s1")}
          <div class="tf m5">M5</div>
          <div class="tf h1">H1</div>
          <div class="tf d1">D</div>
          <div class="m30">M30</div>
          ${chevron(21, 12)}
          ${sep("s2")}
          ${icon(30, 32, svg`<path d="M1.500 6 V31"/><rect x="8" y="1.500" width="16" height="7" rx="2"/><rect x="8" y="12.500" width="20.500" height="7" rx="2"/><rect x="8" y="23.500" width="9" height="7" rx="2"/>`)}
          ${sep("s3")}
          ${icon(37, 36, svg`<path d="M1.500 35 L4 25 L25 4 Q29 0 33 4 Q37 8 33 12 L12 33 Z M23 6 L31 14"/>`)}
          <div class="candles">${icon(33, 33, svg`<path d="M1.500 1.500 V31.500 H32 M12 4 V9.500 M12 20.500 V25 M25 1.500 V6.500 M25 18 V22.500"/><rect x="8.500" y="9.500" width="7" height="11" rx="1.500"/><rect x="21.500" y="6.500" width="7" height="11.500" rx="1.500"/>`)}</div>
          <div class="ind">Indicators</div>
          ${sep("s4")}
          ${icon(26, 36, svg`<rect x="1.500" y="1.500" width="23" height="33" rx="11.500"/><path d="M13 8.500 V13.500" stroke-width="3"/>`)}
          <div class="layout">${icon(32, 34, svg`<rect x="1.500" y="1.500" width="23" height="24" rx="2.500"/><path d="M12.500 1.500 V25.500 M1.500 13.500 H24.500"/><rect x="19" y="19.500" width="12" height="13" rx="2.500" fill="#383b3c"/>`)}</div>
          <div class="dom">${icon(34, 36, svg`<rect x="1.500" y="1.500" width="31" height="33" rx="3.500" stroke="#2374ae" stroke-width="3"/><path d="M19 1.500 H30 Q32.500 1.500 32.500 4 V32 Q32.500 34.500 30 34.500 H19 Z" fill="#2374ae" stroke="none"/>`)}</div>
          <div class="trader">DOM Trader</div>
          ${chevron(22, 13)}
          <div class="name">SOLUSDT 30m</div>
          <div class="badge">Dark footprint</div>
          <div class="right">
            ${icon(32, 34, svg`<path d="M31 1.500 L19.500 13.500 M19.500 4.500 V13.500 H29 M1 32.500 L13 20.500 M3.500 20.500 H13 V30"/>`)}
            <div class="link">${icon(36, 36, svg`<path d="M14.500 21.500 Q10.500 16.500 14.500 12 L22 4.500 Q27.500 -0.500 32 4 Q36.500 8.500 31.500 14 L26.500 19 M21.500 14.500 Q25.500 19.500 21.500 24 L14 31.500 Q8.500 36.500 4 32 Q-0.500 27.500 4.500 22 L9.500 17"/>`)}</div>
            ${icon(36, 31, svg`<path d="M5 6.500 H10.500 L13.500 1.500 H22.500 L25.500 6.500 H31 Q34.500 6.500 34.500 10 V26 Q34.500 29.500 31 29.500 H5 Q1.500 29.500 1.500 26 V10 Q1.500 6.500 5 6.500 Z"/><circle cx="18" cy="17.500" r="5.500"/>`)}
            <div class="cal">${icon(33, 35, svg`<rect x="1.500" y="5" width="30" height="28.500" rx="4"/><path d="M1.500 14 H31.500 M9.500 1.500 V8 M23.500 1.500 V8"/><path d="M9.500 20.500 h.1 M14.500 20.500 h.1 M19.500 20.500 h.1 M24.500 20.500 h.1 M9.500 26.500 h.1 M14.500 26.500 h.1 M19.500 26.500 h.1 M24.500 26.500 h.1"/>`)}</div>
            <div class="w247">24/7</div>
            ${sep("s5")}
            ${icon(36, 36, gear)}
            <div class="soft expand">${icon(26, 26, svg`<path d="M9 1.500 H1.500 V9 M1.500 1.500 L10 10 M17 1.500 H24.500 V9 M24.500 1.500 L16 10 M9 24.500 H1.500 V17 M1.500 24.500 L10 16 M17 24.500 H24.500 V17 M24.500 24.500 L16 16"/>`)}</div>
            <div class="soft">${icon(19, 19, svg`<path stroke-width="3.400" d="M1.500 1.500 L17.500 17.500 M17.500 1.500 L1.500 17.500"/>`)}</div>
          </div>
        </div>
        <div class="body">
          <side-tools></side-tools>
          <price-chart></price-chart>
          <div class="fold">${icon(14, 25, svg`<path d="M1 1 L13 12.500 L1 24"/>`)}</div>
          <order-panel></order-panel>
        </div>
      </div>
      <div class="under"><div class="grip"></div></div>
    `;
  }
}
